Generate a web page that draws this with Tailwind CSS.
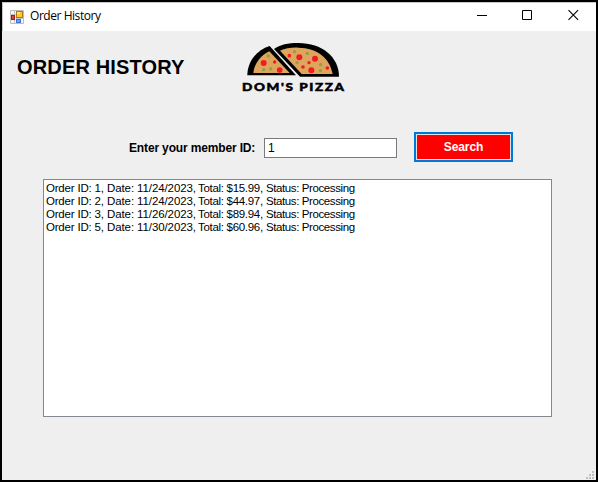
<!DOCTYPE html>
<html lang="en">
<head>
<meta charset="utf-8">
<title>Order History</title>
<script src="https://cdn.jsdelivr.net/npm/@tailwindcss/browser@4"></script>
</head>
<body class="w-[598px] h-[482px] overflow-hidden bg-white font-['Liberation_Sans',sans-serif] text-black">
<div class="w-[598px] h-[482px] border-2 border-black bg-[#efefef] flex flex-col">
  <header class="h-[29px] shrink-0 bg-white flex items-center border-l border-t border-[#c8c8c8]">
    <svg class="ml-[7px] mt-[-1px] w-[14px] h-[14px] shrink-0" viewBox="0 0 14 14">
      <path d="M.5 .5h13v13H.5z" fill="#f4f4f4" stroke="#bdbdbd"/>
      <path d="M0 4.500h6M4.500 0v14M6 8.500h8" stroke="#c4c4c4"/>
      <rect x="6.500" y="1.500" width="6" height="6" fill="#ffc832" stroke="#b07a10"/>
      <rect x="7" y="2" width="3" height="2" fill="#ffe288"/>
      <rect x="1.500" y="5.500" width="3" height="4" fill="#d84b3c" stroke="#a31b12"/>
      <rect x="6.500" y="9.500" width="4" height="3" fill="#6ba1f5" stroke="#3f74d4"/>
    </svg>
    <h1 class="ml-[6px] mt-[-2px] font-['Open_Sans',sans-serif] text-[12px] leading-[16px] tracking-[-0.45px] whitespace-nowrap">Order History</h1>
    <svg class="ml-auto mr-[15px] mt-[-4px] w-[104px] h-[12px] shrink-0" viewBox="0 0 104 12" fill="none" stroke="#000">
      <path d="M0 6.500h10M45.500 1.500h9v9h-9z"/>
      <path d="M91.500 1.200l9.600 9.600M101.100 1.200l-9.600 9.600" stroke-width="1.100"/>
    </svg>
  </header>
  <main class="flex flex-col flex-1">
    <div class="flex h-[70px]">
      <h2 class="w-[228px] pl-[15px] pt-[24px] font-bold text-[20px] leading-[24px] tracking-[0.15px] whitespace-nowrap">ORDER HISTORY</h2>
      <svg class="mt-[4px] w-[130px] h-[65px] shrink-0" viewBox="0 0 390 195">
        <path d="M52 121C52 82 78 46 119 33L198 121Z"/>
        <path d="M70 114C73 86 91 62 118 49L179 114Z" fill="#dea55c"/>
        <path d="M132 42C150 29 174 24 205 24C276 24 327 66 327 125H210Z"/>
        <path d="M150 47C166 40 184 37 205 38C263 39 300 70 308 117H215Z" fill="#dea55c"/>
        <g fill="#f01b24">
          <circle cx="101" cy="84" r="9"/><circle cx="149" cy="105" r="8.500"/><circle cx="134" cy="81" r="5"/>
          <circle cx="178" cy="62" r="5.500"/><circle cx="208" cy="67" r="9"/><circle cx="255" cy="71" r="9"/>
          <circle cx="237" cy="83" r="5"/><circle cx="219" cy="96" r="5.500"/><circle cx="244" cy="106" r="9"/><circle cx="292" cy="99" r="5.500"/>
        </g>
        <g fill="#8fa048">
          <circle cx="115" cy="63" r="5"/><circle cx="101" cy="104" r="5"/><circle cx="122" cy="102" r="5"/>
          <circle cx="194" cy="50" r="5"/><circle cx="232" cy="55" r="5"/><circle cx="201" cy="83" r="5"/>
          <circle cx="272" cy="89" r="5"/><circle cx="271" cy="107" r="5"/>
        </g>
        <text x="36" y="167" textLength="311" lengthAdjust="spacingAndGlyphs" font-family="Lato, sans-serif" font-weight="900" font-size="34" stroke="#000" stroke-width="1.500" letter-spacing="4">DOM'S PIZZA</text>
      </svg>
    </div>
    <form class="mt-[31px] ml-[127px] flex h-[32px] items-center" onsubmit="return false">
      <label for="member" class="w-[135px] font-bold text-[12px] leading-[14px] tracking-[-0.15px] whitespace-nowrap">Enter your member ID:</label>
      <input id="member" value="1" class="w-[133px] h-[20px] border border-[#7a7a7a] bg-white pl-[3px] text-[12px] leading-[14px] outline-none">
      <button class="ml-[17px] mt-[-2px] w-[99px] h-[30px] border-2 border-[#0078d7] bg-[#e1e1e1] p-px"><span class="flex w-full h-full items-center justify-center bg-[#ff0000] text-white font-bold text-[12px] leading-[14px] tracking-[-0.1px]">Search</span></button>
    </form>
    <ul class="mt-[15px] ml-[41px] w-[509px] h-[238px] border border-[#828790] bg-white pt-[2px] pl-[2px] text-[11.5px] leading-[13px] whitespace-nowrap">
      <li class="flex"><span class="w-[61px] tracking-[-0.2px]">Order ID: 1,</span><span class="w-[91px] tracking-[-0.1px]">Date: 11/24/2023,</span><span class="w-[68px] tracking-[-0.3px]">Total: $15.99,</span><span class="tracking-[-0.4px]">Status: Processing</span></li>
      <li class="flex"><span class="w-[61px] tracking-[-0.2px]">Order ID: 2,</span><span class="w-[91px] tracking-[-0.1px]">Date: 11/24/2023,</span><span class="w-[68px] tracking-[-0.3px]">Total: $44.97,</span><span class="tracking-[-0.4px]">Status: Processing</span></li>
      <li class="flex"><span class="w-[61px] tracking-[-0.2px]">Order ID: 3,</span><span class="w-[91px] tracking-[-0.1px]">Date: 11/26/2023,</span><span class="w-[68px] tracking-[-0.3px]">Total: $89.94,</span><span class="tracking-[-0.4px]">Status: Processing</span></li>
      <li class="flex"><span class="w-[61px] tracking-[-0.2px]">Order ID: 5,</span><span class="w-[91px] tracking-[-0.1px]">Date: 11/30/2023,</span><span class="w-[68px] tracking-[-0.3px]">Total: $60.96,</span><span class="tracking-[-0.4px]">Status: Processing</span></li>
    </ul>
    <svg class="mt-auto ml-auto mr-[2px] mb-px w-[8px] h-[8px] fill-[#bfbfbf]" viewBox="0 0 8 8">
      <path d="M6 0h2v2H6zM3 3h2v2H3zM6 3h2v2H6zM0 6h2v2H0zM3 6h2v2H3zM6 6h2v2H6z"/>
    </svg>
  </main>
</div>
</body>
</html>
